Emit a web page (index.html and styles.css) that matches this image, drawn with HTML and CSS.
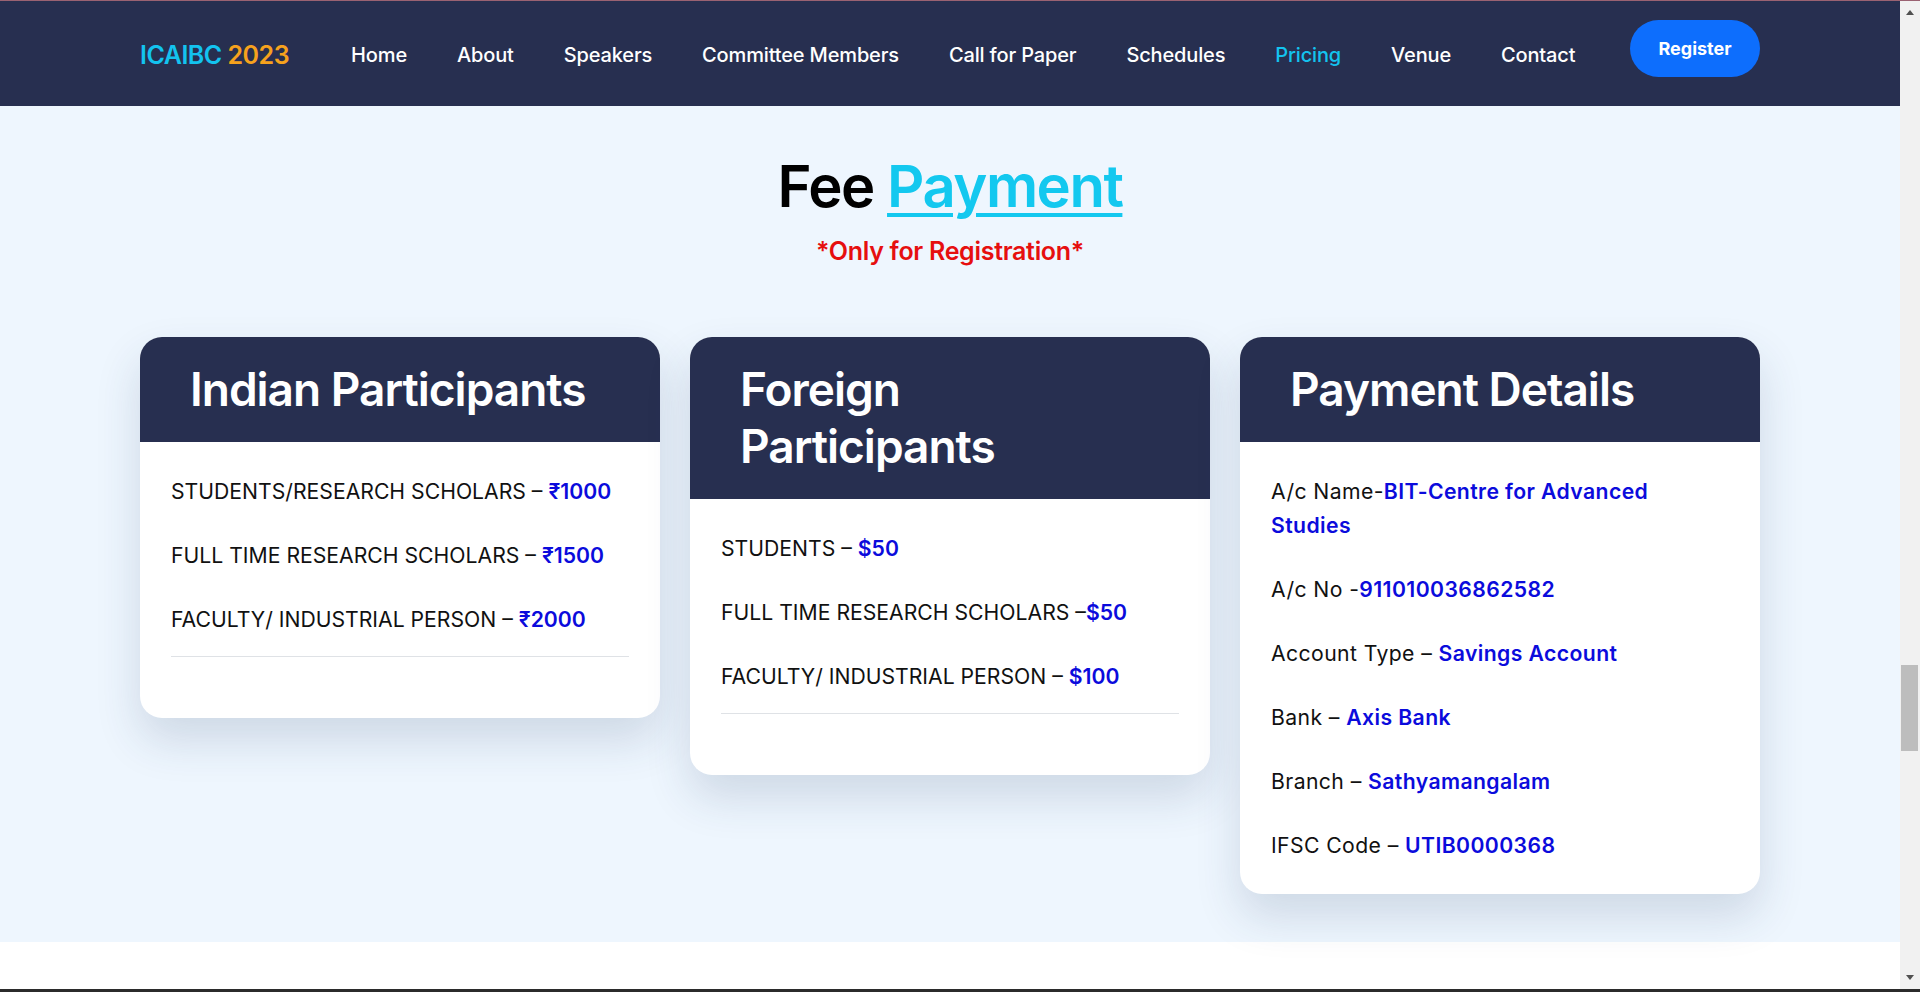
FILE: index.html
```html
<!DOCTYPE html>
<html lang="en">
<head>
<meta charset="utf-8">
<title>ICAIBC 2023 - Pricing</title>
<link rel="stylesheet" href="styles.css">
</head>
<body>
<div class="window">
  <div class="viewport">
    <header class="navbar">
      <div class="container nav-inner">
        <a class="brand" href="#"><span class="brand-a">ICAIBC</span> <span class="brand-b">2023</span></a>
        <ul class="nav-links">
          <li><a href="#">Home</a></li>
          <li><a href="#">About</a></li>
          <li><a href="#">Speakers</a></li>
          <li><a href="#">Committee Members</a></li>
          <li><a href="#">Call for Paper</a></li>
          <li><a href="#">Schedules</a></li>
          <li><a href="#" class="active">Pricing</a></li>
          <li><a href="#">Venue</a></li>
          <li><a href="#">Contact</a></li>
        </ul>
        <a class="btn-register" href="#">Register</a>
      </div>
    </header>

    <section class="pricing">
      <div class="container">
        <h2 class="section-title">Fee <a href="#" class="hl">Payment</a></h2>
        <p class="section-sub">*Only for Registration*</p>

        <div class="cards">
          <div class="card">
            <div class="card-head"><h3>Indian Participants</h3></div>
            <div class="card-body">
              <p>STUDENTS/RESEARCH SCHOLARS – <b>₹1000</b></p>
              <p>FULL TIME RESEARCH SCHOLARS – <b>₹1500</b></p>
              <p>FACULTY/ INDUSTRIAL PERSON – <b>₹2000</b></p>
              <hr>
            </div>
          </div>

          <div class="card">
            <div class="card-head"><h3>Foreign Participants</h3></div>
            <div class="card-body">
              <p>STUDENTS – <b>$50</b></p>
              <p>FULL TIME RESEARCH SCHOLARS –<b>$50</b></p>
              <p>FACULTY/ INDUSTRIAL PERSON – <b>$100</b></p>
              <hr>
            </div>
          </div>

          <div class="card">
            <div class="card-head"><h3>Payment Details</h3></div>
            <div class="card-body mixed">
              <p>A/c Name-<b>BIT-Centre for Advanced Studies</b></p>
              <p>A/c No -<b>911010036862582</b></p>
              <p>Account Type – <b>Savings Account</b></p>
              <p>Bank – <b>Axis Bank</b></p>
              <p>Branch – <b>Sathyamangalam</b></p>
              <p>IFSC Code – <b>UTIB0000368</b></p>
            </div>
          </div>
        </div>
      </div>
    </section>
    <div class="after"></div>
  </div>
  <div class="scrollbar">
    <span class="arrow up"></span>
    <div class="track"><span class="thumb"></span></div>
    <span class="arrow down"></span>
  </div>
</div>
</body>
</html>
```
FILE: styles.css
```css
* { box-sizing: border-box; }
html, body { margin: 0; padding: 0; height: 100%; overflow: hidden; }
body {
  font-family: Inter, "Noto Sans", sans-serif;
  color: #000;
  background: #fff;
}
a { text-decoration: none; }

.window {
  display: flex;
  height: 992px;
  border-top: 1px solid #9a6272;
  border-bottom: 3px solid #2b2b2b;
}
.viewport {
  flex: 1;
  overflow: hidden;
  background: #fff;
}
.container {
  width: 1620px;
  margin: 0 auto;
}

/* nav */
.navbar {
  background: #272f50;
  height: 105px;
}
.nav-inner {
  display: flex;
  align-items: center;
  height: 100%;
}
.brand {
  font-size: 25px;
  font-weight: 600;
  letter-spacing: -0.5px;
  padding-top: 3px;
}
.brand-a { color: #13c3ef; }
.brand-b { color: #f6a21d; }
.nav-links {
  list-style: none;
  display: flex;
  margin: 0 0 0 37px;
  padding: 3px 0 0;
}
.nav-links a {
  display: block;
  padding: 0 25px;
  color: #fff;
  font-size: 20px;
  font-weight: 500;
  letter-spacing: -0.15px;
}
.nav-links a.active { color: #13c3ef; }
.btn-register {
  margin-left: auto;
  margin-top: -10px;
  background: #0d6efd;
  color: #fff;
  font-size: 18px;
  font-weight: 700;
  height: 57px;
  width: 130px;
  border-radius: 29px;
  display: flex;
  align-items: center;
  justify-content: center;
}

/* section */
.pricing {
  background: #eef6fe;
  padding: 42px 0 48px;
}
.section-title {
  text-align: center;
  margin: 0;
  font-size: 58px;
  line-height: 77px;
  font-weight: 600;
  letter-spacing: -1.5px;
  color: #000;
}
.section-title .hl {
  color: #13c8ef;
  text-decoration: underline;
  text-decoration-thickness: 4px;
  text-underline-offset: 6px;
}
.section-sub {
  text-align: center;
  margin: 12px 0 0;
  color: #e60f0f;
  font-size: 25px;
  line-height: 29px;
  font-weight: 600;
  letter-spacing: -0.3px;
}

.cards {
  display: grid;
  grid-template-columns: repeat(3, 1fr);
  gap: 30px;
  align-items: start;
  margin-top: 71px;
}
.card {
  background: #fff;
  border-radius: 22px;
  overflow: hidden;
  box-shadow: 0 22px 45px rgba(40, 60, 100, 0.16);
}
.card-head {
  background: #272f50;
  padding: 24px 64px 24px 50px;
}
.card-head h3 {
  margin: 0;
  color: #fff;
  font-size: 46px;
  line-height: 57px;
  font-weight: 600;
  letter-spacing: -1px;
}
.card-body {
  padding: 32px 31px 32px;
}
.card-body p {
  margin: 0 0 30px;
  font-size: 21.2px;
  line-height: 34px;
  font-weight: 400;
  letter-spacing: 0;
  color: #111;
}
.card-body.mixed p { letter-spacing: 0.4px; }
.card-body p:last-of-type { margin-bottom: 0; }
.card-body b {
  color: #0b0bdc;
  font-weight: 600;
}
.card-body hr {
  margin: 20px 0 29px;
  border: 0;
  border-top: 1px solid #dfe2e6;
}

.after { height: 60px; background: #fff; }

/* fake window scrollbar */
.scrollbar {
  width: 20px;
  background: #f1f1f1;
  display: flex;
  flex-direction: column;
  align-items: center;
}
.arrow {
  width: 0; height: 0;
  border-left: 4px solid transparent;
  border-right: 4px solid transparent;
  margin: 9px 0;
}
.arrow.up { border-bottom: 5px solid #505050; }
.arrow.down { border-top: 5px solid #505050; }
.track {
  flex: 1;
  width: 100%;
  padding-top: 641px;
}
.thumb {
  display: block;
  margin-left: 1px;
  width: 17px;
  height: 86px;
  background: #bdbdbd;
}
```
